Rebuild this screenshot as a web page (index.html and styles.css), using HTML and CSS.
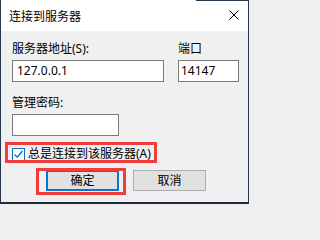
FILE: index.html
```html
<!DOCTYPE html>
<html lang="zh-CN">
<head>
<meta charset="utf-8">
<title>连接到服务器</title>
<link rel="stylesheet" href="styles.css">
</head>
<body>
<div class="window">
  <div class="titlebar">
    <span class="title">连接到服务器</span>
    <svg class="close" width="10" height="10" viewBox="0 0 10 10"><path d="M0.5 0.5 L9.5 9.5 M9.5 0.5 L0.5 9.5" stroke="#000" stroke-width="1" fill="none"/></svg>
  </div>
  <div class="content">
    <div class="row">
      <div class="field server">
        <div class="label">服务器地址(S):</div>
        <div class="input">127.0.0.1</div>
      </div>
      <div class="field port">
        <div class="label">端口</div>
        <div class="input">14147</div>
      </div>
    </div>
    <div class="field pwd">
      <div class="label">管理密码:</div>
      <div class="input"></div>
    </div>
    <div class="check">
      <span class="box"><svg width="11" height="11" viewBox="0 0 11 11"><path d="M1.5 5.5 L4.2 8.2 L9.5 2" stroke="#0a5fb4" stroke-width="1.2" fill="none"/></svg></span>
      <span class="check-label">总是连接到该服务器(A)</span>
    </div>
    <div class="buttons">
      <div class="btn default">确定</div>
      <div class="btn">取消</div>
    </div>
  </div>
  <div class="mark mark-check"></div>
  <div class="mark mark-ok"></div>
</div>
</body>
</html>
```

FILE: styles.css
```css
html, body {
  margin: 0;
  padding: 0;
  background: #f0f0f0;
}
.window {
  position: relative;
  width: 249px;
  height: 204px;
  box-sizing: border-box;
  border-left: 1px solid #26394d;
  border-right: 1px solid #26394d;
  border-bottom: 2px solid #1d2c3c;
  background: #f0f0f0;
  font-family: "Noto Sans", "Noto Sans CJK SC", sans-serif;
  font-size: 12px;
  color: #000;
  overflow: hidden;
}
.titlebar {
  height: 31px;
  display: flex;
  align-items: center;
  justify-content: space-between;
  padding: 0 9px 0 8px;
  background: linear-gradient(to right, transparent 195px, #26394d 195px) top / 100% 1px no-repeat, #fff;
}
.title {
  font-family: "Noto Sans CJK SC", sans-serif;
  font-size: 12px;
  line-height: 16px;
  margin-top: 1px;
}
.close {
  display: block;
  margin-top: -1px;
}
.content {
  padding: 10px 0 0 11px;
  display: flex;
  flex-direction: column;
}
.row {
  display: flex;
  gap: 14px;
}
.label {
  line-height: 16px;
  height: 16px;
  margin-bottom: 3px;
  white-space: nowrap;
}
.input {
  height: 22px;
  box-sizing: border-box;
  border: 1px solid #7a7a7a;
  background: #fff;
  padding-left: 4px;
  line-height: 20px;
  font-size: 12px;
}
.server .input { width: 152px; }
.port .input { width: 61px; padding-left: 2px; }
.pwd {
  margin-top: 13px;
}
.pwd .input { width: 107px; }
.check {
  margin-top: 11px;
  display: flex;
  align-items: center;
  height: 14px;
}
.box {
  width: 13px;
  height: 13px;
  box-sizing: border-box;
  border: 1px solid #0a6fd1;
  background: #fff;
  display: flex;
  align-items: center;
  justify-content: center;
}
.box svg { display: block; }
.check-label {
  margin-left: 3px;
  line-height: 16px;
  white-space: nowrap;
}
.buttons {
  margin-top: 9px;
  margin-left: 34px;
  display: flex;
  gap: 14px;
}
.btn {
  width: 73px;
  height: 21px;
  box-sizing: border-box;
  background: #e1e1e1;
  border: 1px solid #adadad;
  display: flex;
  align-items: center;
  justify-content: center;
  line-height: 16px;
}
.btn.default {
  border: 2px solid #0078d7;
}
.mark {
  position: absolute;
  box-sizing: border-box;
  border: 3px solid #f23d3d;
}
.mark-check {
  left: 4px;
  top: 142px;
  width: 152px;
  height: 21px;
}
.mark-ok {
  left: 35px;
  top: 168px;
  width: 90px;
  height: 27px;
}
```
